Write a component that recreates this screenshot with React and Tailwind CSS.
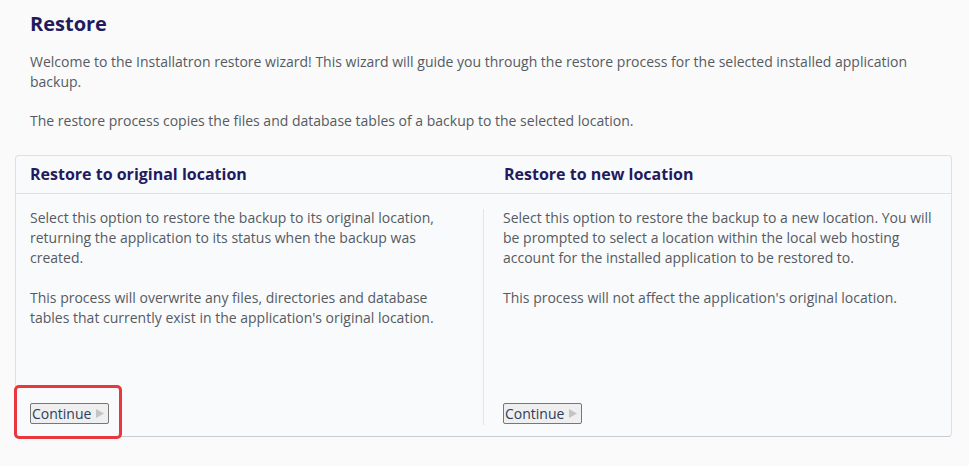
function ContinueButton() {
  return (
    <button className="inline-flex h-[21px] w-[79px] items-center justify-between rounded-[2px] border border-[#777] bg-[#efefef] pl-[1px] pr-[4px] text-[14px] leading-[18px] text-[#2c3e5c]">
      <span>Continue</span>
      <svg width="8" height="9" viewBox="0 0 8 9">
        <path d="M0 0 L8 4.5 L0 9 Z" fill="#c4c4c4" />
      </svg>
    </button>
  )
}

export default function App() {
  const options = [
    {
      title: 'Restore to original location',
      paragraphs: [
        'Select this option to restore the backup to its original location, returning the application to its status when the backup was created.',
        "This process will overwrite any files, directories and database tables that currently exist in the application's original location."
      ]
    },
    {
      title: 'Restore to new location',
      paragraphs: [
        'Select this option to restore the backup to a new location. You will be prompted to select a location within the local web hosting account for the installed application to be restored to.',
        "This process will not affect the application's original location."
      ]
    }
  ]

  return (
    <div className="min-h-screen bg-[#fafafa] font-['Open_Sans',sans-serif] text-[14px] leading-[20px] text-[#555a62]">
      <div className="px-[30px] pt-[10px]">
        <h1 className="text-[20px] font-bold leading-[28px] text-[#1f1b5e]">Restore</h1>
        <p className="mt-[14px]">
          Welcome to the Installatron restore wizard! This wizard will guide you through the restore process for the selected installed application backup.
        </p>
        <p className="mt-[19px]">
          The restore process copies the files and database tables of a backup to the selected location.
        </p>
      </div>

      <div className="relative ml-[15px] mt-[24px] w-[937px] rounded-[4px] border border-[#dde0e5] border-b-[#c6cbd4] bg-[#f9fafb]">
        {/* Header */}
        <div className="grid h-[38px] grid-cols-[467px_1fr] items-center border-b border-[#dde0e5] pb-[1px] text-[16px] font-bold leading-[22px] text-[#1f1b5e]">
          <div className="pl-[14px]">{options[0].title}</div>
          <div className="pl-[21px]">{options[1].title}</div>
        </div>

        {/* Body */}
        <div className="grid grid-cols-[467px_1fr] pb-[11px] pt-[15px]">
          {options.map((opt, i) => (
            <div
              key={opt.title}
              className={
                i === 0
                  ? 'flex h-[216px] flex-col justify-between pl-[14px] pr-[30px]'
                  : 'flex h-[216px] flex-col justify-between border-l border-[#e2e4e8] pl-[19px] pr-[14px]'
              }
            >
              <div className="-mt-[1px]">
                {opt.paragraphs.map((p, j) => (
                  <p key={j} className={j > 0 ? 'mt-[20px]' : ''}>
                    {p}
                  </p>
                ))}
              </div>
              <div className="pb-[1px]">
                <ContinueButton />
              </div>
            </div>
          ))}
        </div>

        {/* Highlight annotation */}
        <div className="pointer-events-none absolute left-[-2px] top-[229px] h-[54px] w-[108px] rounded-[5px] border-[3px] border-[#e8383d]" />
      </div>
    </div>
  )
}
